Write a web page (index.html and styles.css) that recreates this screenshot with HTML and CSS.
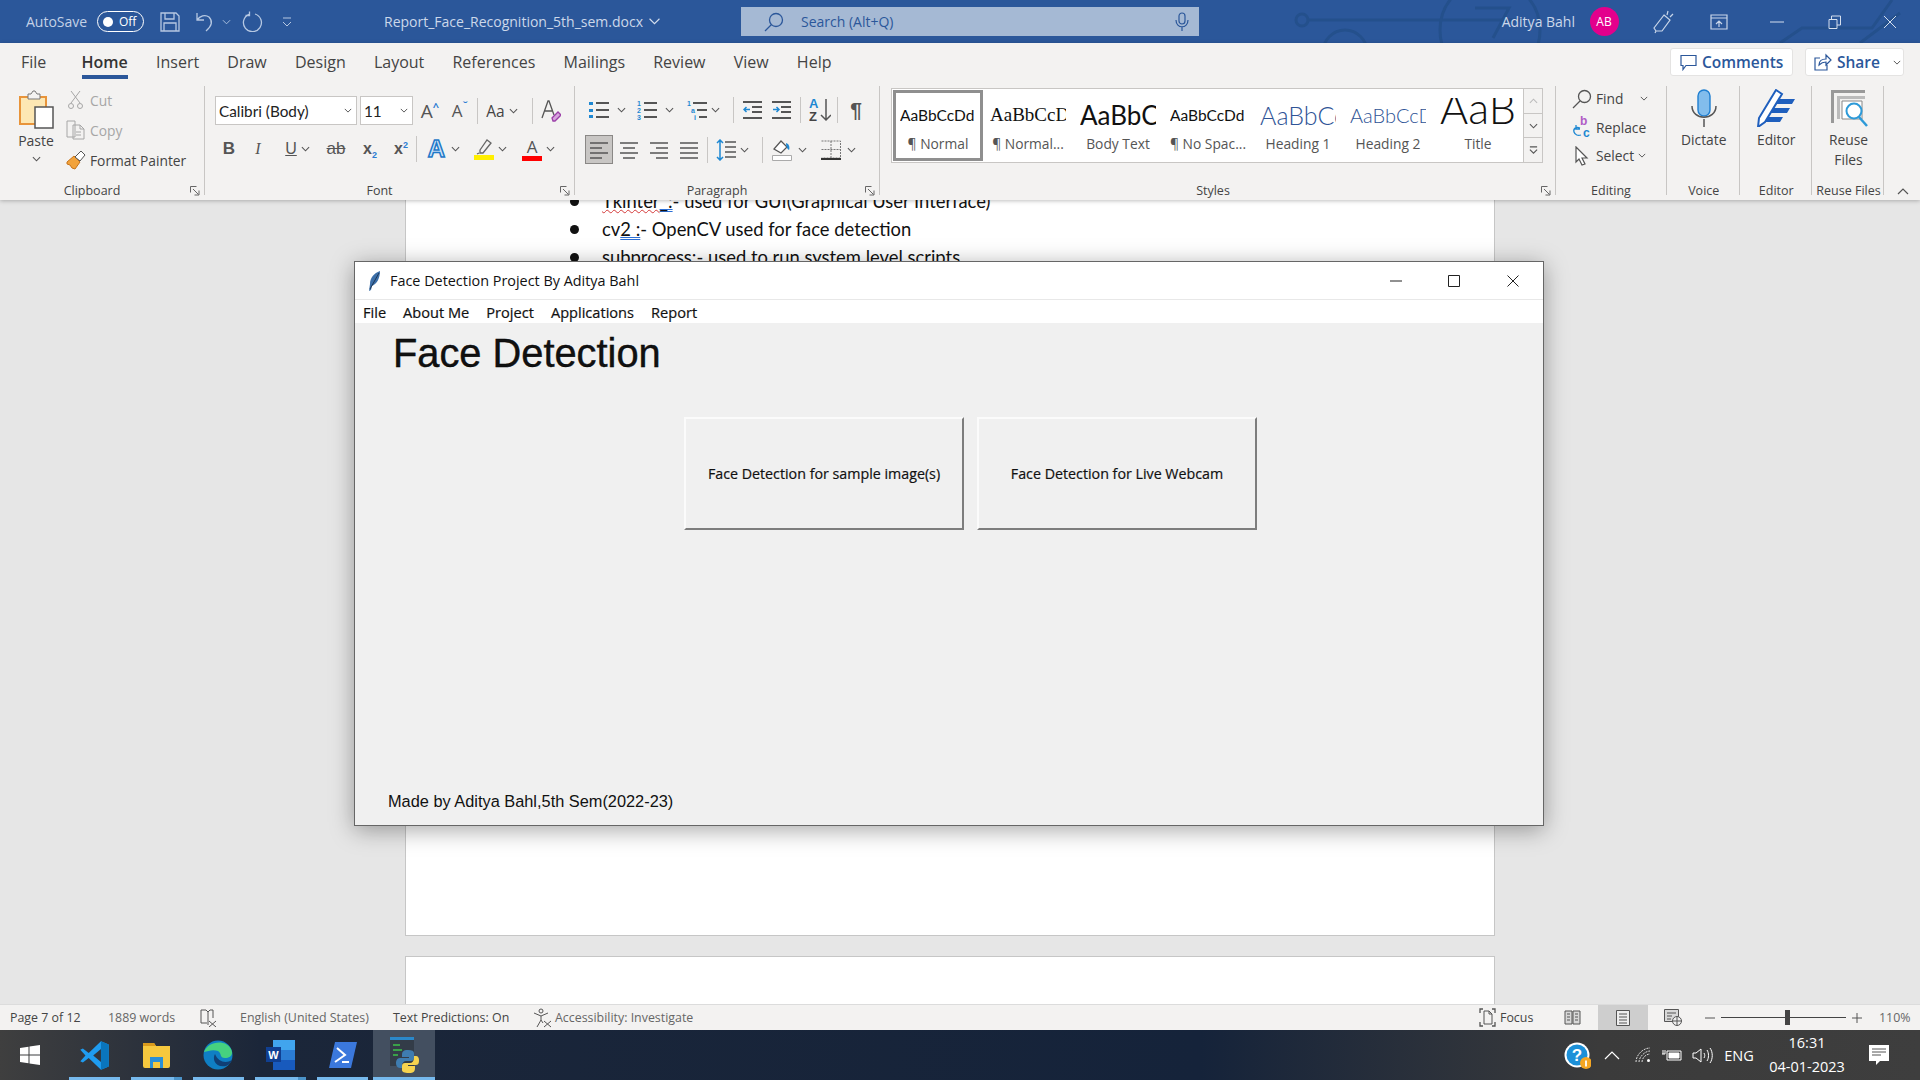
FILE: index.html
```html
<!DOCTYPE html>
<html lang="en">
<head>
<title>Report_Face_Recognition_5th_sem.docx - Word</title>
<meta charset="UTF-8">
<link rel="stylesheet" href="styles.css">
</head>
<body>
<svg class="sprite">
  <symbol id="chev" viewBox="0 0 10 6"><path d="M1 1l4 4 4-4" fill="none" stroke="#555" stroke-width="1.2"/></symbol>
  <symbol id="launch" viewBox="0 0 10 10"><path d="M.5 .5h6M.5 .5v6M3 3l5.5 5.5M9 4.500V9H4.500" fill="none" stroke="#666"/></symbol>
  <symbol id="list" viewBox="0 0 20 20"><path d="M7 3h13M7 10h13M7 17h13" stroke="#555" stroke-width="2"/></symbol>
</svg>

<div class="titlebar">
  <svg class="circuit" viewBox="0 0 700 43" width="700" height="43" fill="none" stroke="#24508c" stroke-width="3">
    <circle cx="82" cy="20" r="6"/><path d="M88 20H300"/><circle cx="125" cy="52" r="22"/><circle cx="270" cy="30" r="50"/>
    <path d="M255 8h34l-16 30"/><path d="M560 43l22-15h70l20-28M640 43l40-30"/>
  </svg>
  <span class="autosave">AutoSave</span>
  <span class="toggle"><i></i>Off</span>
  <svg class="center" width="20" height="20" viewBox="0 0 20 20" fill="none" stroke="#b6c8e2" stroke-width="1.300"><path d="M1 1h15l3 3v15H1zM5 1v6h9V1M4 19v-8h12v8"/></svg>
  <svg class="center" width="18" height="20" viewBox="0 0 18 20" fill="none" stroke="#b6c8e2" stroke-width="1.300"><path d="M1 1v7h7M1 8c3-4 8-6 12-3 4 4 3 9-3 14"/></svg>
  <svg class="center" width="9" height="6" viewBox="0 0 10 6" fill="none" stroke="#b6c8e2"><path d="M1 1l4 4 4-4"/></svg>
  <svg class="center" width="21" height="21" viewBox="0 0 21 21" fill="none" stroke="#b6c8e2" stroke-width="1.300"><path d="M13 3a9 9 0 1 1-6 .3M7.500 .5v4h-4"/></svg>
  <svg class="center" width="12" height="10" viewBox="0 0 12 10" fill="none" stroke="#b6c8e2"><path d="M2 1h8M2 5l4 4 4-4"/></svg>
  <div class="doc-title">Report_Face_Recognition_5th_sem.docx <svg width="11" height="7" viewBox="0 0 10 6" fill="none" stroke="#d5dfee"><path d="M.5 .5L5 5l4.500-4.500"/></svg></div>
  <div class="search">
    <svg width="20" height="20" viewBox="0 0 20 20" fill="none" stroke="#2b579a" stroke-width="1.300"><circle cx="12" cy="8" r="6.500"/><path d="M7.500 12.500L1 19"/></svg>
    <span class="search-text">Search (Alt+Q)</span>
    <svg class="search-mic" width="14" height="20" viewBox="0 0 14 20" fill="none" stroke="#2b579a" stroke-width="1.200"><rect x="4" y="1" width="6" height="11" rx="3"/><path d="M1 8c0 9 12 9 12 0M7 15v4"/></svg>
  </div>
  <span class="user-name">Aditya Bahl</span>
  <span class="avatar center">AB</span>
  <svg class="center" width="22" height="24" viewBox="0 0 22 24" fill="none" stroke="#c9d6e9" stroke-width="1.200"><path d="M12 5l6 5-8 11H4l-2-3zM4 21l-1 2M16 1l-1 4M21 4l-3 3"/></svg>
  <svg class="center" width="18" height="16" viewBox="0 0 18 16" fill="none" stroke="#c9d6e9" stroke-width="1.200"><path d="M1 1h16v14H1zM1 4h16M9 13V7M6 10l3-3 3 3"/></svg>
  <svg class="center" width="14" height="2" viewBox="0 0 14 2"><path d="M0 1h14" stroke="#d5dfee"/></svg>
  <svg class="center" width="13" height="14" viewBox="0 0 13 14" fill="none" stroke="#d5dfee"><path d="M1 4.500h8v9H1zM3.500 4.500V1h9v9H9"/></svg>
  <svg class="center" width="14" height="14" viewBox="0 0 14 14" fill="none" stroke="#d5dfee"><path d="M1 1l12 12M13 1L1 13"/></svg>
</div>

<div class="ribbon">
  <div class="tabs">
    <span class="tab">File</span>
    <span class="tab tab-active">Home</span>
    <span class="tab">Insert</span>
    <span class="tab">Draw</span>
    <span class="tab">Design</span>
    <span class="tab">Layout</span>
    <span class="tab">References</span>
    <span class="tab">Mailings</span>
    <span class="tab">Review</span>
    <span class="tab">View</span>
    <span class="tab">Help</span>
    <div class="tab-actions">
      <span class="action action-comments"><svg width="17" height="17" viewBox="0 0 17 17" fill="none" stroke="#2b579a" stroke-width="1.200"><path d="M1 1.500h15v10H6l-3 4v-4H1z"/></svg>Comments</span>
      <span class="action action-share"><svg width="18" height="18" viewBox="0 0 18 18" fill="none" stroke="#2b579a" stroke-width="1.200"><path d="M6 5H1v12h12v-5M5 12c0-4 3-6 7-6V2l5 5-5 5V9c-3 0-5 1-7 3z"/></svg>Share<svg class="share-chev" width="8" height="5"><use href="#chev"/></svg></span>
    </div>
  </div>

  <div class="groups">
    <div class="group group-clip">
      <div class="clip-body">
        <div class="paste">
          <svg width="35" height="39" viewBox="0 0 35 39">
            <path d="M1 7h26v27H1z" fill="#fde7b3" stroke="#e8943a" stroke-width="2"/>
            <path d="M9 4h3l2-3h2l2 3h3v5H9z" fill="#f3f2f1" stroke="#777"/>
            <path d="M16 17h18v21H16z" fill="#fff" stroke="#555" stroke-width="1.500"/>
          </svg>
          <span>Paste</span>
          <svg class="paste-chev" width="9" height="6"><use href="#chev"/></svg>
        </div>
        <div class="clip-tools">
          <div class="clip-row disabled">
            <svg width="20" height="20" viewBox="0 0 20 20" fill="none" stroke="#a6a6a6"><path d="M5 1l9 12M14 1L5 13"/><circle cx="5" cy="16" r="2.500"/><circle cx="14" cy="16" r="2.500"/></svg>Cut
          </div>
          <div class="clip-row disabled">
            <svg width="20" height="20" viewBox="0 0 20 20" fill="none" stroke="#a6a6a6"><path d="M1 1h8v16H1zM7 5h7l4 4v10H7zM14 5v4h4M10 12h5M10 15h5"/></svg>Copy
          </div>
          <div class="clip-row">
            <svg width="20" height="20" viewBox="0 0 20 20"><path d="M1 12l7-6 6 6-5 7-3-1-2-3-3-1z" fill="#f2a33c" stroke="#c7741a"/><path d="M9 7l6-6 4 4-5 6z" fill="#fff" stroke="#555"/></svg>Format Painter
          </div>
        </div>
      </div>
      <div class="group-foot"><span class="group-label">Clipboard</span><svg class="launcher" width="10" height="10"><use href="#launch"/></svg></div>
    </div>

    <div class="group group-font">
      <div class="tool-row font-row-a">
        <div class="combo combo-font">Calibri (Body)<svg width="8" height="5"><use href="#chev"/></svg></div>
        <div class="combo combo-size">11<svg width="8" height="5"><use href="#chev"/></svg></div>
        <span class="center glyph-a">A<sup>^</sup></span>
        <span class="center glyph-b">A<sup>ˇ</sup></span>
        <span class="vsep center"></span>
        <span class="center pair glyph-c">Aa<svg width="9" height="6"><use href="#chev"/></svg></span>
        <span class="vsep center"></span>
        <svg class="center" width="20" height="24" viewBox="0 0 20 24" fill="none"><path d="M1 19L7 2h1l5 14M4 12h7" stroke="#555" stroke-width="1.300"/><path d="M11 19l6-6 3 3-6 6h-2z" fill="#d7a5de" stroke="#9b3fa8" stroke-width="1.300"/></svg>
      </div>
      <div class="tool-row font-row-b">
        <b class="center fmt">B</b>
        <i class="center fmt">I</i>
        <span class="center pair"><u class="fmt">U</u><svg width="9" height="6"><use href="#chev"/></svg></span>
        <s class="center fmt fmt-ab">ab</s>
        <span class="center fmt fmt-x">x<sub>2</sub></span>
        <span class="center fmt fmt-x">x<sup>2</sup></span>
        <span class="vsep center"></span>
        <span class="center pair"><span class="text-fx">A</span><svg width="9" height="6"><use href="#chev"/></svg></span>
        <span class="center pair">
          <svg width="20" height="22" viewBox="0 0 20 22"><path d="M6 12l7-10 4 3-8 10H6zM5 15l-2 1" fill="none" stroke="#666" stroke-width="1.300"/><path d="M0 17h20v5H0z" fill="#ffef00"/></svg>
          <svg width="9" height="6"><use href="#chev"/></svg>
        </span>
        <span class="center pair">
          <span class="font-color">A</span>
          <svg width="9" height="6"><use href="#chev"/></svg>
        </span>
      </div>
      <div class="group-foot foot-font"><span class="group-label">Font</span><svg class="launcher" width="10" height="10"><use href="#launch"/></svg></div>
    </div>

    <div class="group group-para">
      <div class="tool-row para-row-a">
        <span class="center pair para-gap">
          <svg width="20" height="20" viewBox="0 0 20 20"><path d="M0 2h4v3H0zM0 9h4v3H0zM0 15h4v3H0z" fill="#1e88d2"/><use href="#list"/></svg>
          <svg width="9" height="6"><use href="#chev"/></svg>
        </span>
        <span class="center pair para-gap">
          <svg width="20" height="20" viewBox="0 0 20 20"><text x="0" y="6" class="num">1</text><text x="0" y="13" class="num">2</text><text x="0" y="20" class="num">3</text><use href="#list"/></svg>
          <svg width="9" height="6"><use href="#chev"/></svg>
        </span>
        <span class="center pair">
          <svg width="20" height="20" viewBox="0 0 20 20"><text x="0" y="6" class="num">1</text><text x="4" y="13" class="num">a</text><text x="7" y="20" class="num">i</text><path d="M6 3h14M10 10h10M12 17h8" stroke="#555" stroke-width="2"/></svg>
          <svg width="9" height="6"><use href="#chev"/></svg>
        </span>
        <span class="vsep center"></span>
        <svg class="center" width="19" height="18" viewBox="0 0 19 18"><path d="M0 1h19M9 6h10M9 11h10M0 17h19" stroke="#555" stroke-width="2"/><path d="M7 8.500H1M3.500 6L1 8.500 3.500 11" fill="none" stroke="#1e88d2" stroke-width="1.500"/></svg>
        <svg class="center" width="19" height="18" viewBox="0 0 19 18"><path d="M0 1h19M9 6h10M9 11h10M0 17h19" stroke="#555" stroke-width="2"/><path d="M1 8.500h6M4.500 6L7 8.500 4.500 11" fill="none" stroke="#1e88d2" stroke-width="1.500"/></svg>
        <span class="vsep center"></span>
        <svg class="center" width="22" height="24" viewBox="0 0 22 24"><text x="0" y="10" class="sort-a">A</text><text x="0" y="23" class="sort-z">Z</text><path d="M17 1v21M12 17l5 5 5-5" fill="none" stroke="#555" stroke-width="1.500"/></svg>
        <span class="vsep center"></span>
        <span class="center pilcrow">¶</span>
      </div>
      <div class="tool-row para-row-b">
        <span class="center align-on"><svg width="18" height="18" viewBox="0 0 18 18"><path d="M0 2h18M0 7h12M0 12h18M0 17h12" stroke="#555" stroke-width="1.500"/></svg></span>
        <svg class="center" width="18" height="18" viewBox="0 0 18 18"><path d="M0 2h18M3 7h12M0 12h18M3 17h12" stroke="#555" stroke-width="1.500"/></svg>
        <svg class="center" width="18" height="18" viewBox="0 0 18 18"><path d="M0 2h18M6 7h12M0 12h18M6 17h12" stroke="#555" stroke-width="1.500"/></svg>
        <svg class="center" width="18" height="18" viewBox="0 0 18 18"><path d="M0 2h18M0 7h18M0 12h18M0 17h18" stroke="#555" stroke-width="1.500"/></svg>
        <span class="vsep center"></span>
        <span class="center pair">
          <svg width="20" height="22" viewBox="0 0 20 22"><path d="M4 1v20M1 4l3-3 3 3M1 18l3 3 3-3" fill="none" stroke="#1e88d2" stroke-width="1.500"/><path d="M9 3h11M9 8h11M9 13h11M9 18h11" stroke="#555" stroke-width="1.500"/></svg>
          <svg width="9" height="6"><use href="#chev"/></svg>
        </span>
        <span class="vsep center"></span>
        <span class="center pair pair-wide">
          <svg width="20" height="22" viewBox="0 0 20 22"><path d="M2 10l7-8 6 6-6 6z" fill="#fff" stroke="#555" stroke-width="1.200"/><path d="M14 4c3 1 4 4 3 7-2-1-3-4-3-7z" fill="#1e88d2"/><path d="M.5 16.500h19v5H.5z" fill="#fff" stroke="#aaa"/></svg>
          <svg width="9" height="6"><use href="#chev"/></svg>
        </span>
        <span class="center pair pair-wide">
          <svg width="20" height="20" viewBox="0 0 20 20"><path d="M.5 1h19v17H.5M10 1v17M.5 9.500h19" fill="none" stroke="#777" stroke-dasharray="2 1"/><path d="M0 19h20" stroke="#333" stroke-width="2"/></svg>
          <svg width="9" height="6"><use href="#chev"/></svg>
        </span>
      </div>
      <div class="group-foot foot-para"><span class="group-label">Paragraph</span><svg class="launcher" width="10" height="10"><use href="#launch"/></svg></div>
    </div>

    <div class="group group-styles">
      <div class="gallery">
        <div class="style-item style-on"><div class="style-preview pv-normal">AaBbCcDd</div><div class="style-name">¶ Normal</div></div>
        <div class="style-item"><div class="style-preview pv-serif">AaBbCcDd</div><div class="style-name">¶ Normal...</div></div>
        <div class="style-item"><div class="style-preview pv-body">AaBbCcDd</div><div class="style-name">Body Text</div></div>
        <div class="style-item"><div class="style-preview pv-normal">AaBbCcDd</div><div class="style-name">¶ No Spac...</div></div>
        <div class="style-item"><div class="style-preview pv-h1">AaBbCcDd</div><div class="style-name">Heading 1</div></div>
        <div class="style-item"><div class="style-preview pv-h2">AaBbCcDd</div><div class="style-name">Heading 2</div></div>
        <div class="style-item"><div class="style-preview pv-title">AaB</div><div class="style-name">Title</div></div>
        <div class="gallery-scroll">
          <span class="scroll-btn"><svg width="9" height="6" viewBox="0 0 10 6"><path d="M1 5l4-4 4 4" fill="none" stroke="#bbb" stroke-width="1.200"/></svg></span>
          <span class="scroll-btn"><svg width="9" height="6"><use href="#chev"/></svg></span>
          <span class="scroll-btn"><svg width="9" height="9" viewBox="0 0 10 10" fill="none" stroke="#555" stroke-width="1.200"><path d="M1 1h8M1 4l4 4 4-4"/></svg></span>
        </div>
      </div>
      <div class="group-foot"><span class="group-label">Styles</span><svg class="launcher" width="10" height="10"><use href="#launch"/></svg></div>
    </div>

    <div class="group group-edit">
      <div class="edit-rows">
        <div class="edit-row">
          <svg width="20" height="20" viewBox="0 0 20 20" fill="none" stroke="#555" stroke-width="1.300"><circle cx="12.500" cy="7.500" r="6"/><path d="M8 12L1 19"/></svg>Find<svg class="edit-chev" width="8" height="5"><use href="#chev"/></svg>
        </div>
        <div class="edit-row">
          <svg width="20" height="22" viewBox="0 0 20 22"><text x="8" y="9" class="rep-b">b</text><text x="11" y="21" class="rep-c">c</text><path d="M8 12c-4-2-7 1-6 4 1 3 4 4 7 3M4 9v4h4" fill="none" stroke="#1e88d2" stroke-width="1.300"/></svg>Replace
        </div>
        <div class="edit-row">
          <svg width="20" height="20" viewBox="0 0 20 20"><path d="M4 1l11 11h-5l3 6-3 1-3-6-3 3z" fill="#fff" stroke="#555" stroke-width="1.200"/></svg>Select<svg class="select-chev" width="8" height="5"><use href="#chev"/></svg>
        </div>
      </div>
      <div class="group-foot foot-edit"><span class="group-label">Editing</span></div>
    </div>

    <div class="group group-big">
      <div class="big-tool">
        <svg width="26" height="38" viewBox="0 0 26 38"><rect x="7" y="1" width="12" height="26" rx="6" fill="#82bdec" stroke="#1f7fd1" stroke-width="1.400"/><path d="M1 17c0 15 24 15 24 0M13 30v8" fill="none" stroke="#555" stroke-width="1.500"/></svg>
        <span>Dictate</span>
      </div>
      <div class="group-foot"><span class="group-label">Voice</span></div>
    </div>

    <div class="group group-big">
      <div class="big-tool">
        <svg width="38" height="38" viewBox="0 0 38 38"><path d="M18 10h20l-3 5H16zM13 19h20l-3 5H11zM8 28h18l-3 5H6z" fill="#1f5fbd"/><path d="M19 1l6 4L8 33l-7 5 1-9z" fill="#fff" stroke="#1f5fbd" stroke-width="2"/></svg>
        <span>Editor</span>
      </div>
      <div class="group-foot"><span class="group-label">Editor</span></div>
    </div>

    <div class="group group-big group-last">
      <div class="big-tool">
        <svg width="38" height="38" viewBox="0 0 38 38" fill="none"><path d="M1 1h34v3H4v30H1z" fill="#999"/><path d="M7 7h28v3H10v20H7z" fill="#bbb"/><path d="M12 12h20v18H12z" fill="#fff" stroke="#888"/><circle cx="24" cy="22" r="7.500" stroke="#2d9ad8" stroke-width="2" fill="#fff"/><path d="M29 28l8 9" stroke="#2d9ad8" stroke-width="2.500"/></svg>
        <span>Reuse<br>Files</span>
      </div>
      <div class="group-foot"><span class="group-label">Reuse Files</span></div>
    </div>
    <svg class="collapse" width="12" height="7" viewBox="0 0 12 7"><path d="M1 6l5-5 5 5" fill="none" stroke="#555" stroke-width="1.200"/></svg>
  </div>
</div>

<div class="doc-area">
  <div class="page page-one">
    <ul class="doc-list">
      <li><span class="squiggle">Tkinter</span><span class="dbl">_:</span>- used for GUI(Graphical User Interface)</li>
      <li>cv<span class="dbl">2 :</span>- OpenCV used for face detection</li>
      <li>subprocess:- used to run system level scripts</li>
    </ul>
  </div>
  <div class="page page-two"></div>

  <div class="tk-window">
    <div class="tk-title">
      <svg width="13" height="20" viewBox="0 0 13 20"><path d="M12 0C6 2 2 7 2 13l-1 7 2-1 1-4c5-2 8-8 8-15z" fill="#3b6ea8"/><path d="M11 2L2 18" stroke="#16283f" stroke-width=".8"/></svg>
      <span class="tk-title-text">Face Detection Project By Aditya Bahl</span>
      <svg class="tk-min" width="12" height="2"><path d="M0 1h12" stroke="#222"/></svg>
      <svg class="tk-max" width="12" height="12"><path d="M.5 .5h11v11H.5z" fill="none" stroke="#222"/></svg>
      <svg class="tk-close" width="12" height="12"><path d="M.5 .5l11 11M11.500 .5l-11 11" stroke="#222"/></svg>
    </div>
    <div class="tk-menu">
      <span>File</span><span>About Me</span><span>Project</span><span>Applications</span><span>Report</span>
    </div>
    <div class="tk-body">
      <h1 class="tk-heading">Face Detection</h1>
      <div class="tk-buttons">
        <button class="tk-btn">Face Detection for sample image(s)</button>
        <button class="tk-btn">Face Detection for Live Webcam</button>
      </div>
      <p class="tk-foot">Made by Aditya Bahl,5th Sem(2022-23)</p>
    </div>
  </div>
</div>

<div class="statusbar">
  <span>Page 7 of 12</span>
  <span class="muted">1889 words</span>
  <svg width="18" height="18" viewBox="0 0 18 18" fill="none" stroke="#555"><path d="M1 1h5l2 2 2-2h3v8M8 3v13M1 1v13h6M9 12l7 6M16 12l-7 6"/></svg>
  <span class="muted">English (United States)</span>
  <span>Text Predictions: On</span>
  <svg width="20" height="20" viewBox="0 0 20 20" fill="none" stroke="#555"><circle cx="8" cy="3" r="2"/><path d="M1 5l7 3 7-3M8 8v4l-4 7M8 12l2 3M11 13l7 6M18 13l-7 6"/></svg>
  <span class="muted">Accessibility: Investigate</span>
  <svg width="17" height="19" viewBox="0 0 17 19" fill="none" stroke="#555"><path d="M1 5V1h3M13 1h3v4M1 14v4h3M13 18h3v-4" stroke-width="1.300"/><path d="M5 3h5l3 3v10H5zM10 3v3h3"/></svg>
  <span>Focus</span>
  <svg width="17" height="16" viewBox="0 0 17 16" fill="#d8d8d8" stroke="#555"><path d="M1 1h7v13H1zM9 1h7v13H9zM3 4h3M3 7h3M3 10h3M11 4h3M11 7h3M11 10h3"/></svg>
  <span class="view-on"><svg width="14" height="16" viewBox="0 0 14 16" fill="#eee" stroke="#555"><path d="M.5 .5h13v15H.5zM3 4h8M3 7h8M3 10h8M3 13h8"/></svg></span>
  <svg class="status-center" width="18" height="17" viewBox="0 0 18 17" fill="#d8d8d8" stroke="#555"><path d="M.5 .5h14v12H.5zM3 4h9M3 7h5M3 10h4"/><circle cx="13" cy="12" r="4.500" fill="#eee"/><path d="M8.500 12h9M13 7.500v9"/></svg>
  <svg class="status-center" width="10" height="2"><path d="M0 1h10" stroke="#555"/></svg>
  <div class="zoom-track"><span class="zoom-thumb"></span></div>
  <svg class="status-center" width="10" height="10"><path d="M0 5h10M5 0v10" stroke="#555"/></svg>
  <span class="muted zoom-val">110%</span>
</div>

<div class="taskbar">
  <span class="start">
    <svg width="20" height="20" viewBox="0 0 20 20" fill="#fff"><path d="M0 3l8.500-1.300v7.700H0zM9.500 1.500L20 0v9.400H9.500zM0 10.500h8.500v7.800L0 17zM9.500 10.500H20V20L9.500 18.500z"/></svg>
  </span>
  <span class="task running">
    <svg width="31" height="31" viewBox="0 0 24 24"><path d="M17 1L7.500 10 3 6.500 1 7.500 5 12l-4 4.500 2 1L7.500 14l9.500 9 6-2.500v-17zM17 7v10l-6-5z" fill="#1f9cf0" fill-rule="evenodd"/><path d="M17 1l6 2.500v17L17 23z" fill="#0a75bd"/></svg>
  </span>
  <span class="task running split">
    <svg width="29" height="26" viewBox="0 0 29 26"><path d="M1 1h11l2 3h14v20a2 2 0 0 1-2 2H3a2 2 0 0 1-2-2z" fill="#f6c83e"/><path d="M1 1h11l2 3H1z" fill="#d99a1c"/><path d="M8 15h13v11h-3v-6h-7v6H8z" fill="#2a8fd6"/></svg>
  </span>
  <span class="task running">
    <svg width="30" height="30" viewBox="0 0 30 30"><circle cx="15" cy="15" r="14.500" fill="#0f7fc4"/><path d="M1 12C4 2 22-2 28 9c3 6-1 9-6 9-6 0-3-5-7-7-5-2-10 0-14 1z" fill="#46d17f"/><path d="M12 14c-3 5 0 14 11 12 3-1 5-3 6-6-6 4-14 2-17-6z" fill="#103f75"/></svg>
  </span>
  <span class="task running split">
    <svg width="29" height="30" viewBox="0 0 29 30"><path d="M7 0h22v30H7z" fill="#185abd"/><path d="M7 0h22v10H7z" fill="#41a5ee"/><path d="M7 10h22v10H7z" fill="#2b7cd3"/><path d="M0 7h15v15H0z" fill="#103f91"/><text x="7.500" y="19" class="word-w">W</text></svg>
  </span>
  <span class="task running">
    <svg width="29" height="26" viewBox="0 0 29 26"><path d="M7 0h22l-6 26H1z" fill="#3b78dc"/><path d="M9 6l8 7-10 7M14 20h7" fill="none" stroke="#fff" stroke-width="2"/></svg>
  </span>
  <span class="task running task-active">
    <svg width="30" height="38" viewBox="0 0 30 38"><path d="M1 1h24v29H1z" fill="#333c48"/><path d="M1 1h24v3H1z" fill="#2b88c9"/><path d="M4 9h7M4 14h9M4 19h5" stroke="#3ec14a" stroke-width="1.500"/><path d="M19 14c-5 0-6 2-6 5v2h7v1h-9c-3 0-4 3-4 5s1 5 4 5h2v-3c0-2 2-4 4-4h5c2 0 3-2 3-3v-5c0-2-2-3-6-3z" fill="#3f7cb0"/><path d="M20 37c5 0 6-2 6-5v-2h-7v-1h8c3 0 3-3 3-5s-1-4-3-4h-2v2c0 3-2 5-4 5h-5c-2 0-3 1-3 3v4c0 2 2 3 7 3z" fill="#f7d34f"/></svg>
  </span>
  <div class="tray">
    <svg class="center" width="27" height="27" viewBox="0 0 27 27"><circle cx="13" cy="13" r="12.500" fill="#fff"/><circle cx="13" cy="13" r="10.500" fill="#1c90d8"/><text x="13" y="19" class="help-q">?</text><circle cx="22" cy="21" r="6" fill="#f5a623"/><path d="M22 18.500v6" stroke="#fff" stroke-width="1.800"/></svg>
    <svg class="center" width="16" height="9" viewBox="0 0 16 9"><path d="M1 8l7-7 7 7" fill="none" stroke="#fff" stroke-width="1.200"/></svg>
    <svg class="center" width="16" height="16" viewBox="0 0 16 16" fill="none" stroke="#ddd"><path d="M1 15C1 8 8 1 15 1M4 15c0-5 6-11 11-11M7 15c0-4 4-8 8-8" stroke-dasharray="2 1"/><circle cx="13.500" cy="13.500" r="1.500" fill="#fff" stroke="none"/></svg>
    <svg class="center" width="20" height="12" viewBox="0 0 20 12"><path d="M5 2h14v9H5z" fill="none" stroke="#fff"/><path d="M7 4h10v5H7zM0 5h3M1 1v4M3 1v4" fill="#fff" stroke="#fff"/></svg>
    <svg class="center" width="21" height="17" viewBox="0 0 21 17" fill="none" stroke="#fff"><path d="M1 6h3l5-4v13l-5-4H1zM12 6c1 2 1 3 0 5M15 3c2 3 2 8 0 11M18 1c3 4 3 11 0 15"/></svg>
    <span class="center tray-lang">ENG</span>
    <div class="center clock"><span>16:31</span><span>04-01-2023</span></div>
    <svg class="center" width="20" height="20" viewBox="0 0 20 20"><path d="M0 0h20v16H11l-4 4v-4H0z" fill="#fff"/><path d="M3 4h14M3 7h14M3 10h9" stroke="#555"/></svg>
  </div>
</div>
</body>
</html>
```

FILE: styles.css
```css
* {
    box-sizing: border-box;
}
html, body {
    margin: 0;
    height: 100%;
}
body {
    display: flex;
    flex-direction: column;
    width: 1920px;
    height: 1080px;
    overflow: hidden;
    font-family: "Open Sans", sans-serif;
    color: #444;
    background: #e6e6e6;
}
svg {
    flex: none;
}
.sprite {
    display: none;
}
.center {
    justify-self: center;
}

/* title bar */
.titlebar {
    position: relative;
    flex: none;
    height: 43px;
    padding-left: 26px;
    display: grid;
    grid-template-columns: 71px 47px 52px 18px 24px 29px 40px 434px 458px 376px 58px 60px 52px 64px 50px 61px;
    align-items: center;
    background: #2b579a;
    color: #d5dfee;
    font-size: 14px;
}
.circuit {
    position: absolute;
    right: 0;
    top: 0;
}
.titlebar > * {
    position: relative;
}
.titlebar > .circuit {
    position: absolute;
}
.autosave {
    color: #c3d1e6;
}
.toggle {
    width: 47px;
    height: 21px;
    border: 1px solid #fff;
    border-radius: 11px;
    display: flex;
    align-items: center;
    gap: 6px;
    padding-left: 5px;
    color: #fff;
    font-size: 12px;
}
.toggle i {
    width: 10px;
    height: 10px;
    border-radius: 50%;
    background: #fff;
}
.doc-title {
    padding-left: 77px;
    white-space: nowrap;
    display: flex;
    align-items: center;
    gap: 6px;
    color: #ccd8ea;
}
.search {
    height: 29px;
    background: #a5b9d4;
    color: #2b579a;
    display: flex;
    align-items: center;
    padding-left: 23px;
    padding-right: 10px;
}
.search-text {
    margin-left: 17px;
    font-size: 14px;
}
.search-mic {
    margin-left: auto;
}
.user-name {
    text-align: right;
    color: #ccd8ea;
}
.avatar {
    width: 29px;
    height: 29px;
    border-radius: 50%;
    background: #e3008c;
    color: #fff;
    font-size: 12px;
    line-height: 29px;
    text-align: center;
}

/* ribbon */
.ribbon {
    flex: none;
    height: 157px;
    background: #f3f2f1;
    box-shadow: 0 1px 4px rgba(0, 0, 0, .25);
    position: relative;
    z-index: 2;
}
.tabs {
    height: 43px;
    padding-left: 21px;
    display: flex;
    align-items: flex-start;
    gap: 28.200px;
    font-size: 16px;
}
.tab {
    height: 36px;
    line-height: 38px;
    white-space: nowrap;
}
.tab-active {
    margin-left: 7px;
    font-weight: 600;
    color: #333;
    border-bottom: 4px solid #2b579a;
}
.tab-actions {
    margin-left: auto;
    margin-top: 5px;
    display: flex;
    gap: 12px;
    padding-right: 16px;
}
.action {
    height: 28px;
    background: #fff;
    border: 1px solid #e4e3e2;
    border-radius: 3px;
    display: flex;
    align-items: center;
    gap: 5px;
    font-weight: 600;
    font-size: 15.500px;
    color: #2b579a;
}
.action-comments {
    width: 123px;
    padding-left: 9px;
}
.action-share {
    width: 99px;
    padding-left: 8px;
}
.share-chev {
    margin-left: 8px;
}
.groups {
    display: flex;
    height: 109px;
    font-size: 13.800px;
}
.group {
    flex: none;
    display: flex;
    flex-direction: column;
    height: 109px;
    border-right: 1px solid #c8c6c4;
}
.group-foot {
    margin-top: auto;
    height: 12px;
    display: flex;
    align-items: flex-start;
    font-size: 12.500px;
}
.foot-font {
    margin-left: -10px;
}
.foot-para {
    margin-left: -7px;
}
.foot-edit {
    margin-left: -16px;
}
.group-label {
    flex: 1;
    text-align: center;
    line-height: 16px;
    white-space: nowrap;
}
.launcher {
    width: 10px;
    margin: 3px 4px 0 6px;
}
.group-clip {
    width: 205px;
}
.clip-body {
    display: flex;
}
.paste {
    width: 66px;
    display: flex;
    flex-direction: column;
    align-items: center;
    padding-top: 4px;
    padding-left: 6px;
    line-height: 16px;
    font-size: 14px;
}
.paste span {
    margin-top: 4px;
}
.paste-chev {
    margin-top: 7px;
}
.clip-tools {
    margin-top: -1px;
}
.clip-row {
    height: 30px;
    display: flex;
    align-items: center;
    gap: 4px;
    white-space: nowrap;
}
.disabled {
    color: #a6a6a6;
}
.group-font {
    width: 370px;
    padding-left: 10px;
}
.tool-row {
    display: grid;
    align-items: center;
}
.font-row-a {
    margin-top: 10px;
    height: 29px;
    grid-template-columns: 145px 53px 34px 26px 8px 42px 18px 20px;
}
.font-row-b {
    margin-top: 10px;
    height: 28px;
    grid-template-columns: 28px 30px 49px 28px 40px 22px 9px 44px 50px 47px;
}
.combo {
    height: 29px;
    background: #fff;
    border: 1px solid #c8c6c4;
    font-family: "Lato", sans-serif;
    font-size: 15.300px;
    color: #222;
    display: flex;
    align-items: center;
    justify-content: space-between;
    padding: 0 4px 0 3px;
}
.combo-font {
    width: 142px;
}
.combo-size {
    width: 53px;
}
.vsep {
    display: block;
    width: 1px;
    height: 26px;
    background: #c8c6c4;
}
.glyph-a, .glyph-b {
    font-size: 19px;
    line-height: 22px;
    white-space: nowrap;
    color: #555;
}
.glyph-b {
    font-size: 17px;
}
.glyph-a sup, .glyph-b sup {
    color: #2b7cd3;
    font-size: 11px;
    line-height: 0;
    font-weight: 700;
}
.glyph-c {
    font-size: 15.500px;
}
.pair {
    display: flex;
    align-items: center;
    gap: 4px;
}
.fmt {
    font-family: "Liberation Sans", sans-serif;
    font-size: 16px;
    color: #555;
}
b.fmt {
    font-size: 17px;
}
i.fmt {
    font-family: "Liberation Serif", serif;
}
.fmt-ab {
    font-size: 17px;
}
.fmt-x {
    font-weight: 700;
    white-space: nowrap;
}
.fmt-x sub, .fmt-x sup {
    font-size: 9px;
    line-height: 0;
    color: #2b7cd3;
}
.text-fx {
    width: 20px;
    text-align: center;
    font-family: "Liberation Sans", sans-serif;
    font-size: 24px;
    line-height: 24px;
    font-weight: 700;
    color: #cfe6f8;
    -webkit-text-stroke: 1.500px #1e78c8;
}
.font-color {
    width: 20px;
    height: 23px;
    font-size: 17px;
    line-height: 17px;
    text-align: center;
    color: #555;
    border-bottom: 5px solid #f00;
}
.group-para {
    width: 305px;
    padding-left: 7px;
}
.para-row-a {
    margin-top: 9px;
    height: 29px;
    grid-template-columns: 51px 45px 51px 8px 30px 28px 11px 28px 6px 32px;
}
.para-row-b {
    margin-top: 11px;
    height: 28px;
    grid-template-columns: 34px 26px 34px 26px 10px 41px 18px 36px 63px;
}
.para-gap {
    gap: 8px;
}
.pair-wide {
    gap: 6px;
}
.num {
    font-family: "Liberation Sans", sans-serif;
    font-size: 7px;
    font-weight: 700;
    fill: #1e88d2;
}
.sort-a, .sort-z {
    font-family: "Liberation Sans", sans-serif;
    font-size: 13px;
    font-weight: 700;
    fill: #1e88d2;
}
.sort-z {
    fill: #444;
}
.rep-b, .rep-c {
    font-family: "Liberation Sans", sans-serif;
    font-size: 12px;
    font-weight: 700;
    fill: #b05cc6;
}
.rep-c {
    fill: #1e88d2;
}
.pilcrow {
    font-family: "Liberation Sans", sans-serif;
    font-size: 21px;
    font-weight: 700;
    color: #555;
}
.align-on {
    display: flex;
    align-items: center;
    justify-content: center;
    width: 28px;
    height: 29px;
    background: #c8c6c4;
    border: 1px solid #8a8886;
}
.group-styles {
    width: 676px;
    padding-left: 11px;
}
.gallery {
    margin-top: 2px;
    width: 652px;
    height: 75px;
    background: #fff;
    border: 1px solid #c8c6c4;
    display: flex;
    padding-left: 1px;
}
.style-item {
    width: 90px;
    flex: none;
    height: 71px;
    margin-top: 1px;
    padding: 2px 5px 0;
    text-align: center;
    overflow: hidden;
}
.style-on {
    border: 3px solid #8f8f8f;
    padding: 0 2px;
}
.style-on .style-preview {
    margin-top: -1px;
}
.style-preview {
    width: 76px;
    margin: 0 auto;
    height: 42px;
    line-height: 46px;
    overflow: hidden;
    white-space: nowrap;
    font-family: "Lato", sans-serif;
    color: #111;
    text-align: left;
}
.pv-normal {
    font-size: 15.500px;
}
.pv-serif {
    font-family: "Liberation Serif", serif;
    font-size: 19px;
}
.pv-body {
    font-size: 26px;
}
.pv-h1 {
    font-size: 25px;
    font-weight: 300;
    color: #2f5496;
}
.pv-h2 {
    font-size: 20px;
    font-weight: 300;
    color: #2f5496;
}
.pv-title {
    margin-top: 6px;
    height: 36px;
    line-height: 19px;
    font-size: 43px;
    font-weight: 300;
    text-align: center;
}
.style-name {
    font-size: 13.800px;
    line-height: 20px;
    white-space: nowrap;
    color: #555;
}
.gallery-scroll {
    margin-left: auto;
    width: 19px;
    display: flex;
    flex-direction: column;
    border-left: 1px solid #c8c6c4;
    background: #f3f2f1;
}
.scroll-btn {
    flex: 1;
    display: flex;
    align-items: center;
    justify-content: center;
    border-bottom: 1px solid #c8c6c4;
}
.scroll-btn:last-child {
    border-bottom: 0;
}
.group-edit {
    width: 111px;
    padding-left: 16px;
}
.edit-row {
    height: 29.500px;
    display: flex;
    align-items: center;
    gap: 4px;
    margin-top: -1px;
}
.edit-row:first-child {
    margin-top: -2px;
}
.edit-chev {
    margin-left: 12px;
}
.group-big {
    width: 72.500px;
    padding-left: 2px;
}
.group-big .big-tool {
    margin-top: 3px;
}
.group-last {
    width: 72px;
}
.big-tool {
    display: flex;
    flex-direction: column;
    align-items: center;
    text-align: center;
    line-height: 20px;
}
.big-tool span {
    margin-top: 3px;
}
.collapse {
    margin: 102px 0 0 13px;
}

/* document */
.doc-area {
    position: relative;
    flex: 1;
    min-height: 0;
    display: flex;
    flex-direction: column;
    align-items: center;
    gap: 20px;
    padding-right: 20px;
    overflow: hidden;
}
.page {
    width: 1090px;
    flex: none;
    background: #fff;
    border: 1px solid #c6c6c6;
}
.page-one {
    height: 736px;
    border-top: 0;
}
.page-two {
    height: 60px;
}
.doc-list {
    list-style: none;
    margin: -13px 0 0;
    padding-left: 196px;
    font-family: "Lato", sans-serif;
    font-size: 18.400px;
    line-height: 28px;
    color: #111;
}
.doc-list li::before {
    content: "";
    float: left;
    width: 9px;
    height: 9px;
    margin: 10px 0 0 -32px;
    border-radius: 50%;
    background: #111;
}
.squiggle {
    text-decoration: underline wavy #d43a3a 1px;
}
.dbl {
    text-decoration: underline double #2b6fd6 1px;
}

/* the tk window over the document */
.tk-window {
    position: absolute;
    left: 354px;
    top: 61px;
    width: 1190px;
    height: 565px;
    display: flex;
    flex-direction: column;
    background: #f0f0f0;
    border: 1px solid #666;
    box-shadow: 0 4px 22px rgba(0, 0, 0, .35);
    color: #111;
}
.tk-title {
    flex: none;
    height: 38px;
    background: #fff;
    display: flex;
    align-items: center;
    padding-left: 13px;
    border-bottom: 1px solid #e8e8e8;
}
.tk-title-text {
    margin-left: 9px;
    font-size: 14.400px;
}
.tk-min {
    margin-left: auto;
}
.tk-max {
    margin-left: 46px;
}
.tk-close {
    margin-left: 47px;
    margin-right: 24px;
}
.tk-menu {
    flex: none;
    height: 23px;
    background: #fff;
    display: flex;
    align-items: center;
    gap: 17px;
    padding-left: 8px;
    font-size: 14.600px;
    -webkit-text-stroke: .2px #111;
}
.tk-body {
    flex: 1;
    display: flex;
    flex-direction: column;
    padding-left: 38px;
}
.tk-heading {
    margin: 7px 0 0;
    font-family: "Liberation Sans", sans-serif;
    font-weight: 400;
    font-size: 39.800px;
    line-height: 46px;
    -webkit-text-stroke: .4px #000;
}
.tk-buttons {
    display: flex;
    gap: 13px;
    margin: 41px 0 0 291px;
}
.tk-btn {
    width: 280px;
    height: 113px;
    padding: 0;
    background: #f0f0f0;
    border: 2px solid;
    border-color: #fbfbfb #7d7d7d #7d7d7d #fbfbfb;
    font-family: "Open Sans", sans-serif;
    font-size: 14.250px;
    color: #111;
    -webkit-text-stroke: .2px #111;
}
.tk-foot {
    margin: auto 0 14px -5px;
    font-family: "Liberation Sans", sans-serif;
    font-size: 16.350px;
    line-height: 20px;
}

/* status bar */
.statusbar {
    flex: none;
    height: 26px;
    padding-left: 10px;
    background: #f3f2f1;
    border-top: 1px solid #dcdcdc;
    display: grid;
    grid-template-columns: 98px 92px 40px 153px 140px 22px 924px 21px 64px 34px 50px 50px 23px 125px 22px 1fr;
    align-items: center;
    font-size: 12.400px;
    white-space: nowrap;
}
.statusbar > svg {
    justify-self: start;
}
.statusbar > .status-center {
    justify-self: center;
}
.muted {
    color: #666;
}
.view-on {
    height: 25px;
    background: #cecece;
    display: flex;
    align-items: center;
    justify-content: center;
}
.zoom-track {
    height: 1px;
    background: #444;
    position: relative;
}
.zoom-thumb {
    position: absolute;
    left: 64px;
    top: -7px;
    width: 5px;
    height: 15px;
    background: #444;
}
.zoom-val {
    padding-left: 11px;
}

/* taskbar */
.taskbar {
    flex: none;
    height: 50px;
    display: flex;
    background: linear-gradient(90deg, #3f3f3f 0, #1b2639 260px, #15233a 1200px, #3b3b3b 1600px, #3e3e3e 100%);
}
.start {
    width: 60px;
    margin-right: 3px;
    display: flex;
    align-items: center;
    justify-content: center;
}
.task {
    position: relative;
    width: 62px;
    display: flex;
    align-items: center;
    justify-content: center;
}
.running::after {
    content: "";
    position: absolute;
    left: 6px;
    right: 5px;
    bottom: 0;
    height: 3px;
    background: #76b9ed;
}
.split::before {
    content: "";
    position: absolute;
    right: 5px;
    bottom: 0;
    width: 8px;
    height: 3px;
    background: #4b93c9;
    z-index: 1;
}
.task-active {
    background: #434f60;
}
.task-active::after {
    left: 0;
    right: 0;
}
.word-w {
    font-family: "Liberation Sans", sans-serif;
    font-size: 11px;
    font-weight: 700;
    text-anchor: middle;
    fill: #fff;
}
.tray {
    margin-left: auto;
    width: 360px;
    display: grid;
    grid-template-columns: 34px 36px 26px 32px 28px 46px 90px 54px;
    align-items: center;
    color: #fff;
    font-size: 14.500px;
}
.tray-lang {
    white-space: nowrap;
}
.clock {
    display: flex;
    flex-direction: column;
    align-items: center;
    line-height: 24px;
    white-space: nowrap;
}
.help-q {
    font-family: "Liberation Sans", sans-serif;
    font-size: 17px;
    font-weight: 700;
    text-anchor: middle;
    fill: #fff;
}
```
